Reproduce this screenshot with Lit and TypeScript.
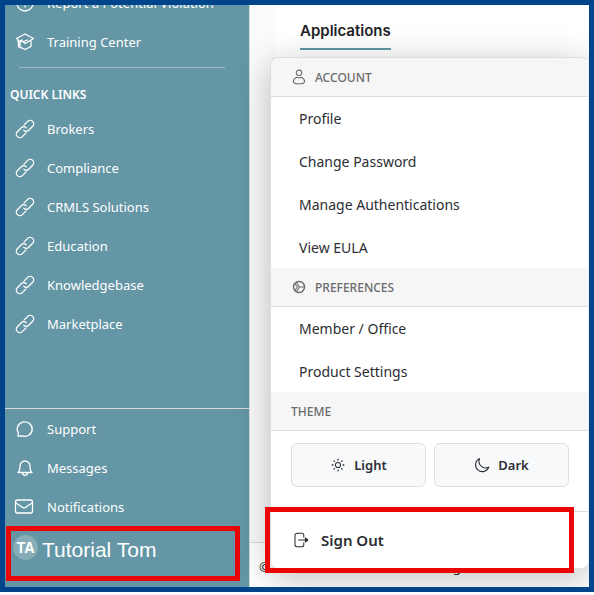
import { LitElement, html, css, svg, TemplateResult } from "lit";
import { customElement } from "lit/decorators.js";

const icon = (body: TemplateResult, size = 20) => html`
  <svg class="icon" width=${size} height=${size} viewBox="0 0 20 20" aria-hidden="true">${body}</svg>
`;

const icons = {
  alert: svg`<circle cx="10" cy="10" r="8"/><path d="M10 6v5M10 13v1"/>`,
  cap: svg`<path d="M1.500 6.500 10 2 18.500 6.500 16 8v6.500L10 17.500 5.500 15.300M1.500 6.500 3 7.500v2M16 8l-6 3.500L8 9.500 12.500 8M3 9.500 7 8M5 9v6.500M3.500 10v5M7 9l-2 1.500"/>`,
  link: svg`<g transform="rotate(-45 10 10)"><path d="M8 13.500H2.700a3.500 3.500 0 0 1 0-7h5.500a3.500 3.500 0 0 1 3.500 3.500M12 6.500h5.300a3.500 3.500 0 0 1 0 7h-5.500a3.500 3.500 0 0 1-3.500-3.500"/></g>`,
  chat: svg`<path d="M3 17.200 3.400 14A7.500 7.200 0 1 1 7.200 16.900Z"/>`,
  bell: svg`<path d="M3 14.500c1.800-1.300 2-3 2-6.500a5 5 0 0 1 10 0c0 3.500.2 5.200 2 6.500ZM7.500 14.800a2.500 2.500 0 0 0 5 0"/>`,
  mail: svg`<rect x="0.500" y="3" width="17" height="13" rx="2"/><path d="m1 6 6.700 4.500a2.500 2.500 0 0 0 2.700 0L17 6"/>`,
  person: svg`<circle cx="10" cy="4.800" r="3.400"/><path d="M7.200 10.300C4.200 11.600 3 13.400 3 15.500c0 1.800 2 2.900 7 2.900s7-1.100 7-2.900c0-2.100-1.200-3.900-4.200-5.200-1.800.9-3.800.9-5.600 0Z"/>`,
  gear: svg`<circle cx="10" cy="10" r="6.900" stroke-width="1.800"/><path d="M7 4.500 10.500 10 7 15.500M10.500 10H17M5.500 6.500 8 10l-2.500 3.500"/>`,
  sun: svg`<circle cx="10" cy="10" r="3.200"/><path d="M10 2.700v1M10 16.300v1M2.700 10h1M16.300 10h1M4.900 4.900l.6.600M14.500 14.500l.6.600M4.900 15.100l.6-.6M14.500 5.500l.6-.6" stroke-width="1.600"/>`,
  moon: svg`<path d="M7 2A8.500 8.500 0 1 0 18.500 12.500 8.200 8.200 0 0 1 7 2Z"/>`,
  exit: svg`<path d="M13.500 6.500V4a2.500 2.500 0 0 0-2.500-2.500H5A2.500 2.500 0 0 0 2.500 4v12A2.500 2.500 0 0 0 5 18.500h6a2.500 2.500 0 0 0 2.500-2.500v-2.500M7 10h11"/><path d="m15.500 7.500 3 2.500-3 2.500Z" fill="currentColor"/>`,
};

@customElement("app-root")
export class AppRoot extends LitElement {
  static styles = css`
    :host {
      display: block;
      background: #fff;
      font-family: "Noto Sans", "Open Sans", sans-serif;
    }
    * { box-sizing: border-box; }
    button { font: inherit; color: inherit; cursor: pointer; }
    a { color: inherit; text-decoration: none; }
    .icon {
      flex: none;
      display: block;
      overflow: visible;
      fill: none;
      stroke: currentColor;
      stroke-width: 1.3;
      stroke-linecap: round;
      stroke-linejoin: round;
    }
    .frame {
      position: relative;
      display: flex;
      min-height: calc(100vh - 3px);
      border: 5px solid #00458b;
      overflow: hidden;
    }
    .sidebar {
      flex: none;
      width: 245px;
      display: flex;
      flex-direction: column;
      padding-bottom: 6px;
      background: #6496a5;
      border-right: 1px solid #d5dcde;
      color: #fff;
      font-size: 13px;
    }
    .links { margin-top: -22px; }
    .link {
      display: flex;
      align-items: center;
      gap: 12px;
      height: 39px;
      padding-left: 10px;
    }
    .rule {
      height: 1px;
      margin: 6px 24px 0 14px;
      border: 0;
      background: #9dbbc5;
    }
    .heading {
      margin: 0;
      padding: 17px 5px 4px;
      font-size: 12px;
      line-height: 20px;
      font-weight: 600;
    }
    .lower {
      margin-top: auto;
      border-top: 1px solid #d5dcde;
    }
    .user {
      display: flex;
      align-items: flex-start;
      gap: 4px;
      width: 234px;
      height: 55px;
      margin-left: 1px;
      padding: 4px 2px;
      border: 5px solid #ea0606;
      background: none;
      font-family: "Liberation Sans", Arial, sans-serif;
      font-size: 21px;
      line-height: 30px;
    }
    .avatar {
      width: 25px;
      height: 25px;
      border-radius: 50%;
      background: #86adb8;
      font: 700 14px/26px Inter, sans-serif;
      text-align: center;
    }
    .main {
      flex: 1;
      min-width: 0;
      display: flex;
      flex-direction: column;
      background: #fbfbfb;
    }
    .card {
      flex: 1;
      margin-left: 26px;
      padding: 14px 24px;
      border-radius: 8px 0 0 0;
      background: #fff;
    }
    .tab {
      display: inline-block;
      padding-bottom: 6px;
      border-bottom: 2px solid #5f96a3;
      color: #1f2328;
      font: 600 15px/23px Inter, sans-serif;
    }
    .footer {
      height: 45px;
      padding: 0 9px;
      border-top: 1px solid #dcdfe6;
      background: #fff;
      color: #222;
      font-size: 13px;
      line-height: 48px;
      white-space: nowrap;
      overflow: hidden;
    }
    .menu {
      position: absolute;
      left: 265px;
      right: 0;
      bottom: 18px;
      border: 1px solid #dedede;
      border-right-color: #f0f0f0;
      border-radius: 8px;
      background: #fff;
      box-shadow: 0 8px 36px rgba(0, 0, 0, 0.27);
      color: #2b2e33;
      font-size: 14px;
    }
    .section {
      display: flex;
      align-items: center;
      gap: 8px;
      height: 39px;
      margin: 0;
      padding: 0 20px;
      border-bottom: 1px solid #dedede;
      background: #f6f6f6;
      color: #6b6b6b;
      font-size: 12px;
      font-weight: 500;
    }
    .section:first-child { border-radius: 8px 8px 0 0; }
    .items { display: grid; gap: 1px; }
    .item {
      height: 42px;
      padding: 0 28px;
      line-height: 43px;
    }
    .themes {
      display: flex;
      gap: 8px;
      padding: 12px 19px 24px 20px;
    }
    .theme {
      flex: 1;
      display: flex;
      align-items: center;
      justify-content: center;
      gap: 8px;
      height: 44px;
      border: 1px solid #dedfe1;
      border-radius: 6px;
      background: #f8f9fb;
      font-size: 13px;
      font-weight: 600;
    }
    .signout {
      display: flex;
      align-items: center;
      gap: 12px;
      width: 100%;
      height: 57px;
      padding: 0 22px;
      border: 0;
      border-top: 1px solid #dedede;
      background: none;
      font-size: 15px;
      font-weight: 600;
    }
    .callout {
      position: absolute;
      left: 260px;
      right: 15px;
      bottom: 14px;
      height: 66px;
      border: 5px solid #ea0606;
      pointer-events: none;
    }
  `;

  private link(glyph: TemplateResult, label: string) {
    return html`<a class="link" href="#">${icon(glyph)}<span>${label}</span></a>`;
  }

  private item(label: string) {
    return html`<a class="item" href="#">${label}</a>`;
  }

  render() {
    const quick = ["Brokers", "Compliance", "CRMLS Solutions", "Education", "Knowledgebase", "Marketplace"];
    return html`
      <div class="frame">
        <aside class="sidebar">
          <nav class="links">
            ${this.link(icons.alert, "Report a Potential Violation")}
            ${this.link(icons.cap, "Training Center")}
            <hr class="rule" />
            <h2 class="heading">QUICK LINKS</h2>
            ${quick.map((label) => this.link(icons.link, label))}
          </nav>
          <div class="lower">
            ${this.link(icons.chat, "Support")}
            ${this.link(icons.bell, "Messages")}
            ${this.link(icons.mail, "Notifications")}
            <button class="user"><span class="avatar">TA</span><span>Tutorial Tom</span></button>
          </div>
        </aside>
        <main class="main">
          <div class="card"><a class="tab" href="#">Applications</a></div>
          <footer class="footer">© 2024 CRMLS Dashboard. All rights reserved.</footer>
        </main>
        <div class="menu">
          <h3 class="section">${icon(icons.person, 16)}ACCOUNT</h3>
          <div class="items">
            ${["Profile", "Change Password", "Manage Authentications", "View EULA"].map((l) => this.item(l))}
          </div>
          <h3 class="section">${icon(icons.gear, 16)}PREFERENCES</h3>
          <div class="items">${["Member / Office", "Product Settings"].map((l) => this.item(l))}</div>
          <h3 class="section">THEME</h3>
          <div class="themes">
            <button class="theme">${icon(icons.sun, 16)}Light</button>
            <button class="theme">${icon(icons.moon, 16)}Dark</button>
          </div>
          <button class="signout">${icon(icons.exit, 16)}Sign Out</button>
        </div>
        <div class="callout"></div>
      </div>
    `;
  }
}
